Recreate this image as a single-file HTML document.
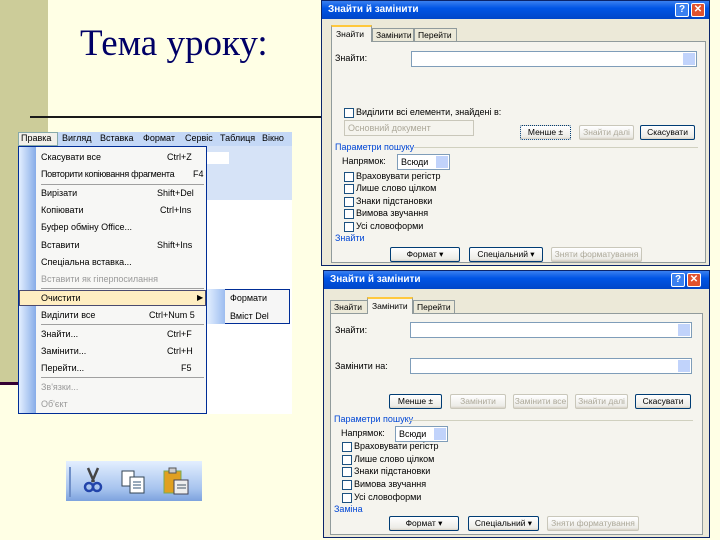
<!DOCTYPE html>
<html><head><meta charset="utf-8"><style>
*{margin:0;padding:0;box-sizing:border-box}
body{width:720px;height:540px;background:#FFFFE5;position:relative;overflow:hidden;font-family:"Liberation Sans",sans-serif;font-size:9px;color:#000}
.a{position:absolute;white-space:nowrap}
.dlg{position:absolute;background:#ECE9D8;border:1px solid #0A246A}
.tb{position:absolute;left:0;right:0;top:0;height:18px;background:linear-gradient(#3A80F0,#0055E5 40%,#0046C8);color:#fff;font-weight:bold;font-size:10px;padding:3px 6px}
.hb{position:absolute;top:2px;width:14px;height:14px;border:1px solid #fff;border-radius:2px;font-size:10px;color:#fff;text-align:center;line-height:12px;font-weight:bold}
.inp{position:absolute;background:#fff;border:1px solid #7F9DB9;height:16px}
.inp:after{content:"";position:absolute;right:1px;top:1px;width:12px;height:12px;background:#C1D3FB}
.btn{position:absolute;height:15px;border:1px solid #003C74;border-radius:2px;background:linear-gradient(#fff,#ECEBE6 85%,#D6D0C5);text-align:center;font-size:8.5px;line-height:13px;white-space:nowrap;overflow:hidden}
.dis{color:#ACA899;border-color:#C9C7BA}
.cb{position:absolute;width:10px;height:10px;border:1px solid #1C5180;background:#fff}
.bl{color:#0046D5}
.mi{position:absolute;font-size:9px;white-space:nowrap}
.sc{position:absolute;font-size:9px;white-space:nowrap}
.sep{position:absolute;right:2px;height:1px;background:#A0A0A0}
.tab{position:absolute;border:1px solid #919B9C;border-bottom:none;padding:1px 3px;font-size:8.5px;white-space:nowrap;overflow:hidden;background:#ECE9D8}
</style></head><body>
<div class="a" style="left:0;top:0;width:48px;height:384px;background:#CCCC99"></div>
<div class="a" style="left:30px;top:116px;width:296px;height:2px;background:#1a1a1a"></div>
<div class="a" style="left:0;top:382px;width:18px;height:3px;background:#330033"></div>
<div class="a" style="left:80px;top:22px;font-family:'Liberation Serif',serif;font-size:37px;color:#000066">Тема уроку:</div>

<!-- menu -->
<div class="a" style="left:18px;top:132px;width:274px;height:14px;background:#C4D8F6"></div>
<div class="a" style="left:18px;top:132px;width:40px;height:14px;background:#F2F0EA;border:1px solid #8AA"></div>
<div class="a" style="left:21px;top:133px">Правка</div>
<div class="a" style="left:62px;top:133px">Вигляд</div>
<div class="a" style="left:100px;top:133px">Вставка</div>
<div class="a" style="left:143px;top:133px">Формат</div>
<div class="a" style="left:185px;top:133px">Сервіс</div>
<div class="a" style="left:220px;top:133px">Таблиця</div>
<div class="a" style="left:262px;top:133px">Вікно</div>
<div class="a" style="left:207px;top:146px;width:85px;height:54px;background:#D6E3F7"></div>
<div class="a" style="left:207px;top:152px;width:22px;height:12px;background:#fff"></div>
<div class="a" style="left:207px;top:200px;width:85px;height:214px;background:#fff"></div>
<div class="a" style="left:207px;top:289px;width:83px;height:35px;background:#F6F6F6;border:1px solid #002D96"></div>
<div class="a" style="left:207px;top:289px;width:18px;height:35px;background:linear-gradient(90deg,#E3EFFF,#9DBDF0)"></div>
<div class="a" style="left:230px;top:293px;font-size:9px">Формати</div>
<div class="a" style="left:230px;top:311px;font-size:9px">Вміст  Del</div>
<div class="a" style="left:18px;top:146px;width:189px;height:268px;background:#F7F7F5;border:1px solid #002D96">
 <div class="a" style="left:0;top:0;width:17px;height:266px;background:linear-gradient(90deg,#E3EFFF,#87ACE8)"></div>
 <div class="mi" style="top:5px;left:22px">Скасувати все</div><div class="sc" style="top:5px;left:148px">Ctrl+Z</div>
 <div class="mi" style="top:22px;left:22px;letter-spacing:-0.3px">Повторити копіювання фрагмента</div><div class="sc" style="top:22px;left:174px">F4</div>
 <div class="sep" style="top:37px;left:22px"></div>
 <div class="mi" style="top:41px;left:22px">Вирізати</div><div class="sc" style="top:41px;left:138px">Shift+Del</div>
 <div class="mi" style="top:58px;left:22px">Копіювати</div><div class="sc" style="top:58px;left:141px">Ctrl+Ins</div>
 <div class="mi" style="top:75px;left:22px">Буфер обміну Office...</div>
 <div class="mi" style="top:93px;left:22px">Вставити</div><div class="sc" style="top:93px;left:138px">Shift+Ins</div>
 <div class="mi" style="top:110px;left:22px">Спеціальна вставка...</div>
 <div class="mi" style="top:127px;left:22px;color:#999">Вставити як гіперпосилання</div>
 <div class="sep" style="top:141px;left:22px"></div>
 <div class="a" style="left:0;top:143px;width:187px;height:16px;background:#FFEEC2;border:1px solid #4B4B6F"></div>
 <div class="mi" style="top:146px;left:22px">Очистити</div><div class="a" style="left:178px;top:146px;font-size:8px">▶</div>
 <div class="mi" style="top:163px;left:22px">Виділити все</div><div class="sc" style="top:163px;left:130px">Ctrl+Num 5</div>
 <div class="sep" style="top:177px;left:22px"></div>
 <div class="mi" style="top:182px;left:22px">Знайти...</div><div class="sc" style="top:182px;left:148px">Ctrl+F</div>
 <div class="mi" style="top:199px;left:22px">Замінити...</div><div class="sc" style="top:199px;left:148px">Ctrl+H</div>
 <div class="mi" style="top:216px;left:22px">Перейти...</div><div class="sc" style="top:216px;left:162px">F5</div>
 <div class="sep" style="top:230px;left:22px"></div>
 <div class="mi" style="top:235px;left:22px;color:#999">Зв'язки...</div>
 <div class="mi" style="top:252px;left:22px;color:#999">Об'єкт</div>
</div>

<!-- toolbar -->
<div class="a" style="left:66px;top:461px;width:136px;height:40px;background:linear-gradient(#E3EFFF,#A6C3EE 70%,#7DA2DE)"></div>
<div class="a" style="left:69px;top:467px;width:2px;height:30px;background:#6F8FC8"></div>
<svg class="a" style="left:82px;top:466px" width="22" height="28"><path d="M6 2 L12 16 M16 2 L10 16" stroke="#444" stroke-width="2.5"/><circle cx="7" cy="21" r="4" fill="none" stroke="#2244AA" stroke-width="2.5"/><circle cx="15" cy="21" r="4" fill="none" stroke="#2244AA" stroke-width="2.5"/></svg>
<svg class="a" style="left:120px;top:469px" width="28" height="26"><rect x="2" y="2" width="12" height="15" fill="#fff" stroke="#345"/><rect x="10" y="8" width="14" height="16" fill="#fff" stroke="#345"/><path d="M13 13h8M13 16h8M13 19h8" stroke="#357"/></svg>
<svg class="a" style="left:161px;top:466px" width="30" height="30"><rect x="3" y="5" width="17" height="22" fill="#E0A020" stroke="#7a5"/><rect x="8" y="2" width="7" height="5" fill="#ccc" stroke="#555"/><rect x="13" y="14" width="14" height="14" fill="#eee" stroke="#445"/><path d="M16 19h9M16 22h9" stroke="#456"/></svg>

<!-- dialog 1 -->
<div class="dlg" style="left:321px;top:0;width:389px;height:266px">
 <div class="tb">Знайти й замінити</div>
 <div class="hb" style="left:353px;background:#3A80F0">?</div>
 <div class="hb" style="left:369px;background:#E0522E">✕</div>
 <div class="a" style="left:9px;top:40px;width:375px;height:222px;border:1px solid #919B9C;background:#F5F4EE"></div>
 <div class="tab" style="left:9px;top:24px;width:41px;height:17px;background:#F5F4EE;border-top:2px solid #FFC83C;padding:2px 4px">Знайти</div>
 <div class="tab" style="left:50px;top:27px;width:42px;height:13px">Замінити</div>
 <div class="tab" style="left:92px;top:27px;width:43px;height:13px">Перейти</div>
 <div class="a" style="left:13px;top:52px">Знайти:</div>
 <div class="inp" style="left:89px;top:50px;width:286px"></div>
 <div class="cb" style="left:22px;top:107px"></div><div class="a" style="left:34px;top:106px">Виділити всі елементи, знайдені в:</div>
 <div class="a" style="left:22px;top:119px;width:130px;height:16px;border:1px solid #C9C7BA;color:#ACA899;padding:2px 3px">Основний документ</div>
 <div class="btn" style="left:198px;top:124px;width:51px;border-style:dotted">Менше ±</div>
 <div class="btn dis" style="left:257px;top:124px;width:55px">Знайти далі</div>
 <div class="btn" style="left:318px;top:124px;width:55px">Скасувати</div>
 <div class="a bl" style="left:13px;top:141px">Параметри пошуку</div>
 <div class="a" style="left:92px;top:146px;width:284px;height:1px;background:#D0D0BF"></div>
 <div class="a" style="left:20px;top:155px">Напрямок:</div>
 <div class="inp" style="left:75px;top:153px;width:53px;padding:2px 3px">Всюди</div>
 <div class="cb" style="left:22px;top:171px"></div><div class="a" style="left:34px;top:170px">Враховувати регістр</div>
 <div class="cb" style="left:22px;top:183px"></div><div class="a" style="left:34px;top:182px">Лише слово цілком</div>
 <div class="cb" style="left:22px;top:196px"></div><div class="a" style="left:34px;top:195px">Знаки підстановки</div>
 <div class="cb" style="left:22px;top:208px"></div><div class="a" style="left:34px;top:207px">Вимова звучання</div>
 <div class="cb" style="left:22px;top:221px"></div><div class="a" style="left:34px;top:220px">Усі словоформи</div>
 <div class="a bl" style="left:13px;top:232px">Знайти</div>
 <div class="btn" style="left:68px;top:246px;width:70px">Формат ▾</div>
 <div class="btn" style="left:147px;top:246px;width:74px">Спеціальний ▾</div>
 <div class="btn dis" style="left:229px;top:246px;width:91px">Зняти форматування</div>
</div>

<!-- dialog 2 -->
<div class="dlg" style="left:323px;top:270px;width:387px;height:268px">
 <div class="tb">Знайти й замінити</div>
 <div class="hb" style="left:347px;background:#3A80F0">?</div>
 <div class="hb" style="left:363px;background:#E0522E">✕</div>
 <div class="a" style="left:6px;top:42px;width:373px;height:222px;border:1px solid #919B9C;background:#F5F4EE"></div>
 <div class="tab" style="left:6px;top:29px;width:38px;height:13px">Знайти</div>
 <div class="tab" style="left:43px;top:26px;width:46px;height:17px;background:#F5F4EE;border-top:2px solid #FFC83C;padding:2px 4px">Замінити</div>
 <div class="tab" style="left:89px;top:29px;width:42px;height:13px">Перейти</div>
 <div class="a" style="left:11px;top:54px">Знайти:</div>
 <div class="inp" style="left:86px;top:51px;width:282px"></div>
 <div class="a" style="left:11px;top:90px">Замінити на:</div>
 <div class="inp" style="left:86px;top:87px;width:282px"></div>
 <div class="btn" style="left:65px;top:123px;width:53px">Менше ±</div>
 <div class="btn dis" style="left:126px;top:123px;width:56px">Замінити</div>
 <div class="btn dis" style="left:189px;top:123px;width:55px">Замінити все</div>
 <div class="btn dis" style="left:251px;top:123px;width:53px">Знайти далі</div>
 <div class="btn" style="left:311px;top:123px;width:56px">Скасувати</div>
 <div class="a bl" style="left:10px;top:143px">Параметри пошуку</div>
 <div class="a" style="left:85px;top:149px;width:284px;height:1px;background:#D0D0BF"></div>
 <div class="a" style="left:17px;top:157px">Напрямок:</div>
 <div class="inp" style="left:71px;top:155px;width:53px;padding:2px 3px">Всюди</div>
 <div class="cb" style="left:18px;top:171px"></div><div class="a" style="left:30px;top:170px">Враховувати регістр</div>
 <div class="cb" style="left:18px;top:184px"></div><div class="a" style="left:30px;top:183px">Лише слово цілком</div>
 <div class="cb" style="left:18px;top:196px"></div><div class="a" style="left:30px;top:195px">Знаки підстановки</div>
 <div class="cb" style="left:18px;top:209px"></div><div class="a" style="left:30px;top:208px">Вимова звучання</div>
 <div class="cb" style="left:18px;top:222px"></div><div class="a" style="left:30px;top:221px">Усі словоформи</div>
 <div class="a bl" style="left:10px;top:233px">Заміна</div>
 <div class="btn" style="left:65px;top:245px;width:70px">Формат ▾</div>
 <div class="btn" style="left:144px;top:245px;width:71px">Спеціальний ▾</div>
 <div class="btn dis" style="left:223px;top:245px;width:92px">Зняти форматування</div>
</div>
</body></html>
